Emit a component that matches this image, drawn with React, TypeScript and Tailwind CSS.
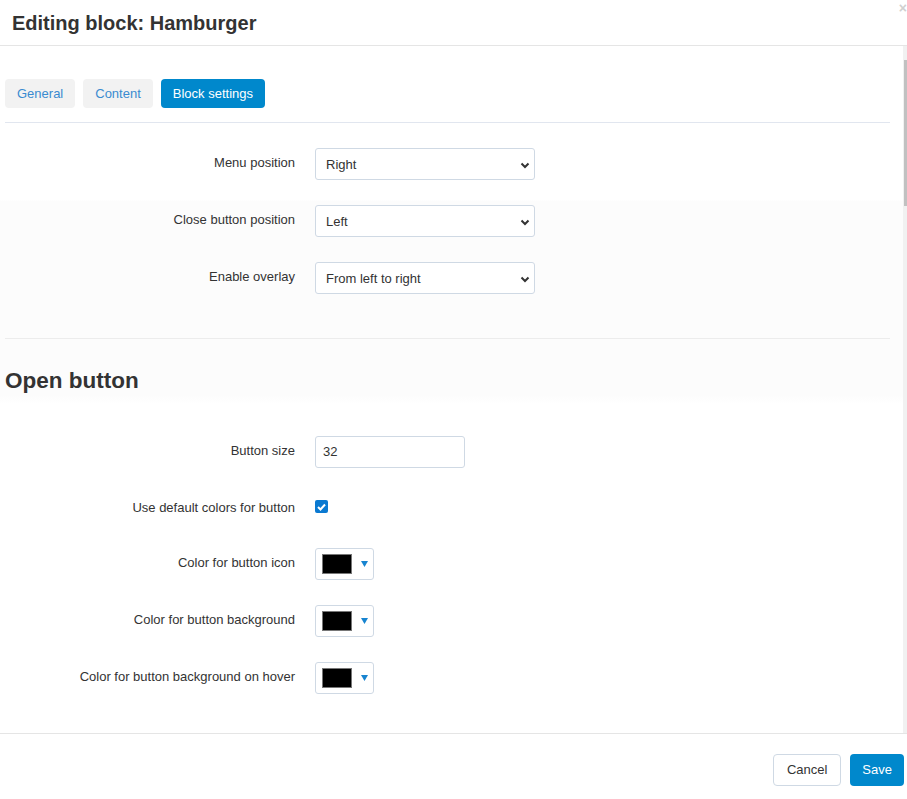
import React from "react";

const labelCls =
  "w-[290px] shrink-0 pt-[6px] text-right text-[13px] leading-[18px] text-[#333]";

const Chevron = () => (
  <svg width="10" height="7" viewBox="0 0 10 7" className="absolute right-[4px] top-[13px]">
    <path d="M1.5 1.5 L5 5 L8.5 1.5" fill="none" stroke="#333" strokeWidth="2" />
  </svg>
);

const SelectRow = ({ label, value }: { label: string; value: string }) => (
  <div className="flex h-8">
    <div className={labelCls}>{label}</div>
    <div className="relative ml-5 h-8 w-[220px] rounded-[3px] border border-[#cfd9e4] bg-white pl-[10px] text-[13px] leading-[32px] text-[#333]">
      {value}
      <Chevron />
    </div>
  </div>
);

const ColorRow = ({ label }: { label: string }) => (
  <div className="flex h-8">
    <div className={labelCls}>{label}</div>
    <div className="ml-5 flex h-8 w-[59px] items-center rounded-[3px] border border-[#cfd9e4] bg-white pl-[6px]">
      <div className="h-[20px] w-[30px] border border-[#777] bg-black" />
      <svg width="7" height="6" viewBox="0 0 7 6" className="ml-[9px]">
        <path d="M0 0 H7 L3.5 6 Z" fill="#1784d0" />
      </svg>
    </div>
  </div>
);

export default function App() {
  return (
    <div
      className="relative flex h-[799px] w-[907px] flex-col overflow-hidden bg-white"
      style={{ fontFamily: '"Liberation Sans", Arial, sans-serif' }}
    >
      {/* header */}
      <div className="flex h-[46px] shrink-0 items-center border-b border-[#e5e5e5] pl-3">
        <h3 className="text-[20px] font-bold leading-none text-[#333]">Editing block: Hamburger</h3>
        <span className="absolute right-[0px] top-[1px] text-[14px] font-bold leading-none text-[#d0d0d0]">
          ×
        </span>
      </div>

      {/* body */}
      <div className="flex h-[687px] shrink-0">
        <div className="flex-1 pl-[5px] pr-[13px] pt-[33px]">
          <div className="flex gap-2">
            <button className="h-[29px] rounded-[4px] bg-[#f2f2f2] px-3 text-[13px] text-[#3a8bd0]">
              General
            </button>
            <button className="h-[29px] rounded-[4px] bg-[#f2f2f2] px-3 text-[13px] text-[#3a8bd0]">
              Content
            </button>
            <button className="h-[29px] rounded-[4px] bg-[#0088cc] px-3 text-[13px] text-white">
              Block settings
            </button>
          </div>
          <div className="mt-[14px] border-t border-[#e1e6ef]" />

          <div className="-ml-[5px] -mr-[13px] bg-[linear-gradient(to_bottom,#ffffff_0px,#ffffff_77px,#fcfcfc_78px,#fcfcfc_272px,#ffffff_281px)] pb-[8px] pl-[5px] pr-[13px]">
            <div className="flex flex-col gap-[25px] pt-[25px]">
              <SelectRow label="Menu position" value="Right" />
              <SelectRow label="Close button position" value="Left" />
              <SelectRow label="Enable overlay" value="From left to right" />
            </div>
            <div className="mt-[44px] border-t border-[#ececec]" />
            <h2 className="mt-[27px] text-[22.5px] font-bold leading-[30px] text-[#333]">Open button</h2>
          </div>

          <div className="flex flex-col pt-[32px]">
            <div className="flex h-8">
              <div className={labelCls}>Button size</div>
              <div className="ml-5 h-8 w-[150px] rounded-[3px] border border-[#cfd9e4] bg-white pl-[7px] text-[13px] leading-[30px] text-[#333]">
                32
              </div>
            </div>
            <div className="mt-[25px] flex h-[30px]">
              <div className={labelCls}>Use default colors for button</div>
              <div className="ml-5 mt-[7px] flex h-[13px] w-[13px] items-center justify-center rounded-[2px] bg-[#0a79d1]">
                <svg width="9" height="8" viewBox="0 0 9 8">
                  <path d="M1 4 L3.5 6.5 L8 1.5" fill="none" stroke="#fff" strokeWidth="2" />
                </svg>
              </div>
            </div>
            <div className="mt-[25px] flex flex-col gap-[25px]">
              <ColorRow label="Color for button icon" />
              <ColorRow label="Color for button background" />
              <ColorRow label="Color for button background on hover" />
            </div>
          </div>
        </div>
        {/* scrollbar */}
        <div className="w-[4px] bg-[#f1f1f1] pt-[14px]">
          <div className="ml-[1px] h-[146px] w-[3px] bg-[#c1c1c1]" />
        </div>
      </div>

      {/* footer */}
      <div className="flex flex-1 items-start justify-end gap-[9px] border-t border-[#e5e5e5] pr-[3px] pt-5">
        <button className="h-[32px] rounded-[4px] border border-[#cfd9e4] bg-white px-[13px] text-[13px] text-[#333]">
          Cancel
        </button>
        <button className="h-[32px] rounded-[4px] bg-[#0088cc] px-3 text-[13px] text-white">Save</button>
      </div>
    </div>
  );
}
